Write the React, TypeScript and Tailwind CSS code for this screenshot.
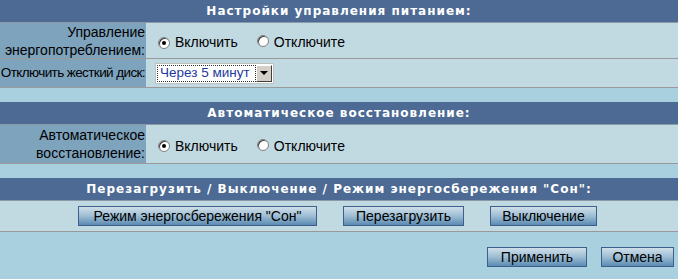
const Radio = ({ checked }: { checked?: boolean }) => (
  <span className="inline-flex w-[12px] h-[12px] rounded-full border border-[#808080] bg-white items-center justify-center shadow-[inset_1px_1px_0_#404040]">
    {checked && <span className="w-[4px] h-[4px] rounded-full bg-black" />}
  </span>
);

const Header = ({ title }: { title: string }) => (
  <div className="h-[23px] bg-[#4c6a93] text-white font-bold text-[12px] tracking-[1px] flex items-center justify-center [font-family:'DejaVu_Sans',sans-serif] border-b border-[#8a9aa8]">
    {title}
  </div>
);

const Btn = ({ label, className }: { label: string; className: string }) => (
  <button className={`h-[20px] border border-[#3e5f8c] bg-gradient-to-b from-[#cfdfe9] via-[#9dbdd3] to-[#5b8bb2] text-[14px] text-black leading-none [font-family:'Liberation_Sans',Arial,sans-serif] ${className}`}>
    {label}
  </button>
);

const OnOff = () => (
  <div className="flex items-center pl-[12px] gap-[3px] text-[14px]">
    <Radio checked />
    <span className="ml-[2px]">Включить</span>
    <span className="ml-[16px]"><Radio /></span>
    <span className="ml-[2px]">Отключите</span>
  </div>
);

export default function App() {
  return (
    <div className="w-[678px] h-[279px] bg-[#a9d0df] [font-family:'Liberation_Sans',Arial,sans-serif] text-[14px] text-black overflow-hidden">
      <Header title="Настройки управления питанием:" />
      <div className="grid grid-cols-[146px_1fr] bg-[#c1d9e1]">
        <div className="bg-[#7ea3bd] h-[36px] flex items-center justify-end text-right leading-[18px] pr-[1px] border-b border-[#999]">
          <div>Управление<br />энергопотреблением:</div>
        </div>
        <div className="border-b border-[#999] flex items-center pt-[4px]">
          <OnOff />
        </div>
        <div className="bg-[#7ea3bd] h-[29px] flex items-center justify-end pr-[1px] border-b border-[#999] whitespace-nowrap text-[13.5px] tracking-[-0.6px]">
          Отключить жесткий диск:
        </div>
        <div className="border-b border-[#999] flex items-center pl-[9px]">
          <div className="w-[119px] h-[21px] bg-white border border-[#c0c0c0] flex items-center p-[1px]">
            <div className="flex-1 h-full border border-dotted border-[#333] flex items-center pl-[2px] text-[13.5px] text-[#1c3a9e] whitespace-nowrap overflow-hidden">
              Через 5 минут
            </div>
            <div className="w-[16px] h-full bg-[#d4d0c8] border border-t-white border-l-white border-b-[#404040] border-r-[#404040] flex items-center justify-center">
              <span className="w-0 h-0 border-l-[4px] border-r-[4px] border-t-[4px] border-l-transparent border-r-transparent border-t-black" />
            </div>
          </div>
        </div>
      </div>
      <div className="h-[14px]" />
      <Header title="Автоматическое восстановление:" />
      <div className="grid grid-cols-[146px_1fr] bg-[#c1d9e1]">
        <div className="bg-[#7ea3bd] h-[39px] flex items-center justify-end text-right leading-[18px] pr-[1px] border-b border-[#999]">
          <div>Автоматическое<br />восстановление:</div>
        </div>
        <div className="border-b border-[#999] flex items-center pt-[4px]">
          <OnOff />
        </div>
      </div>
      <div className="h-[14px]" />
      <Header title={'Перезагрузить / Выключение / Режим энергосбережения "Сон":'} />
      <div className="h-[31px] bg-[#c1d9e1] border-b border-[#999] flex items-center">
        <Btn label={'Режим энергосбережения "Сон"'} className="ml-[78px] w-[239px]" />
        <Btn label="Перезагрузить" className="ml-[26px] w-[121px]" />
        <Btn label="Выключение" className="ml-[26px] w-[107px]" />
      </div>
      <div className="flex justify-end pt-[15px] pr-[4px] gap-[14px]">
        <Btn label="Применить" className="w-[100px]" />
        <Btn label="Отмена" className="w-[73px]" />
      </div>
    </div>
  );
}
